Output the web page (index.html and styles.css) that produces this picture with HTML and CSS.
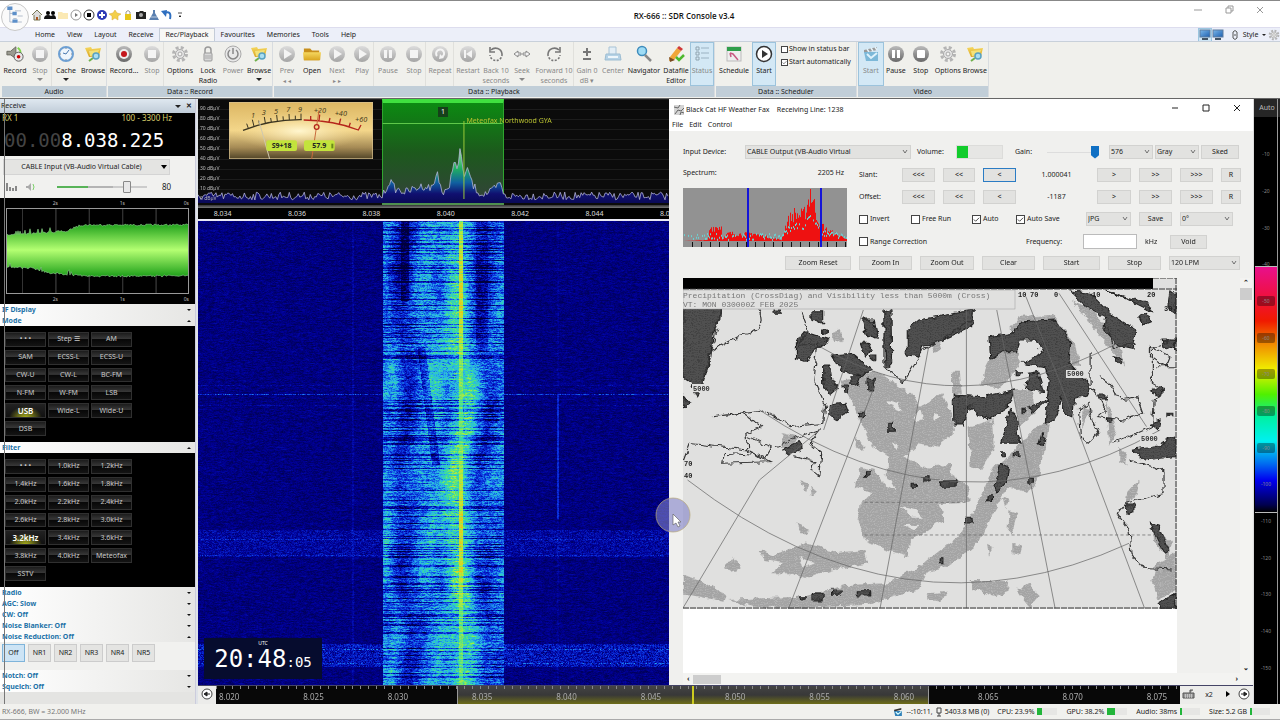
FILE: index.html
```html
<!DOCTYPE html>
<html lang="en">
<head>
    <meta charset="UTF-8">
    <meta name="viewport" content="width=device-width, initial-scale=1.0">
    <title>RX-666 :: SDR Console v3.4</title>
    <link rel="stylesheet" href="styles.css">
</head>
<body>
    <!-- Icon set -->
    <svg class="sprite" aria-hidden="true">
        <defs>
            <linearGradient id="silver" x1="0" y1="0" x2="0" y2="1"><stop offset="0" stop-color="#dcdcdc"/><stop offset="1" stop-color="#a4a4a4"/></linearGradient>
            <linearGradient id="steel" x1="0" y1="0" x2="0" y2="1"><stop offset="0" stop-color="#bbb"/><stop offset="1" stop-color="#686868"/></linearGradient>
            <linearGradient id="gold" x1="0" y1="0" x2="0" y2="1"><stop offset="0" stop-color="#f6d860"/><stop offset="1" stop-color="#d9a520"/></linearGradient>
            <linearGradient id="screen" x1="0" y1="0" x2="1" y2="1"><stop offset="0" stop-color="#7db8ea"/><stop offset="1" stop-color="#1c5fb0"/></linearGradient>
        </defs>
        <symbol id="i-speaker" viewBox="0 0 20 18"><path d="M1 6h4l6-5v13L5 10H1z" fill="#9a9a90" stroke="#66665c"/><path d="M13 2q4 3 3 7" fill="none" stroke="#7fd64d" stroke-width="2"/><circle cx="14" cy="12" r="5" fill="#e8e8e8" stroke="#555"/><circle cx="14" cy="12" r="2" fill="#c00"/></symbol>
        <symbol id="i-stop" viewBox="0 0 18 18"><circle cx="9" cy="9" r="8" fill="url(#silver)"/><rect x="5" y="5" width="8" height="8" fill="#f4f4f4"/></symbol>
        <symbol id="i-stop-dark" viewBox="0 0 18 18"><circle cx="9" cy="9" r="8" fill="url(#steel)"/><rect x="5" y="5" width="8" height="8" rx="1" fill="#fff"/></symbol>
        <symbol id="i-pause" viewBox="0 0 18 18"><circle cx="9" cy="9" r="8" fill="url(#silver)"/><path d="M5 5h3v8H5zM10 5h3v8h-3z" fill="#f4f4f4"/></symbol>
        <symbol id="i-pause-dark" viewBox="0 0 18 18"><circle cx="9" cy="9" r="8" fill="url(#steel)"/><path d="M5 5h3v8H5zM10 5h3v8h-3z" fill="#fff"/></symbol>
        <symbol id="i-play" viewBox="0 0 18 18"><circle cx="9" cy="9" r="8" fill="url(#silver)"/><path d="M6 4l8 5-8 5z" fill="#f4f4f4"/></symbol>
        <symbol id="i-clock" viewBox="0 0 18 18"><circle cx="9" cy="9" r="7" fill="#eef5fc" stroke="#6d9fd2" stroke-width="2"/><path d="M12 5L9 9 6 8" fill="none" stroke="#4a79b0"/><path d="M9 3v1M9 14v1M3 9h1M14 9h1" stroke="#888"/></symbol>
        <symbol id="i-browse" viewBox="0 0 18 18"><path d="M1 3l6-1 1 2 9-1-2 8-10 1z" fill="url(#gold)"/><path d="M5 6l10-1-2 5-7 1z" fill="#f3e27a"/><path d="M9 13l-4 3" stroke="#6fb04c" stroke-width="2"/><circle cx="12" cy="11" r="3" fill="#a9def2" stroke="#58a1c2" stroke-width="1.500"/></symbol>
        <symbol id="i-record" viewBox="0 0 18 18"><circle cx="9" cy="9" r="8" fill="url(#steel)"/><circle cx="9" cy="9" r="5" fill="#eee"/><circle cx="9" cy="9" r="3" fill="#c4161c"/></symbol>
        <symbol id="i-gear" viewBox="0 0 18 18"><circle cx="9" cy="9" r="6.500" fill="none" stroke="#b4b4b4" stroke-width="3" stroke-dasharray="2.900 2.200"/><circle cx="9" cy="9" r="4.500" fill="#e4e4e4" stroke="#a8a8a8"/><circle cx="9" cy="9" r="2" fill="#f4f4f2" stroke="#a8a8a8"/></symbol>
        <symbol id="i-lock" viewBox="0 0 18 18"><path d="M6 8V5q0-3 3-3t3 3v3" fill="none" stroke="#999" stroke-width="1.500"/><rect x="5" y="8" width="8" height="8" rx="1" fill="#d8d8d8" stroke="#999"/><path d="M6 11h6M6 13h6" stroke="#aaa"/></symbol>
        <symbol id="i-power" viewBox="0 0 18 18"><circle cx="9" cy="9" r="8" fill="#e8e8e8" stroke="#aaa"/><path d="M6 5a5 5 0 1 0 6 0M9 3v6" fill="none" stroke="#888" stroke-width="1.500"/></symbol>
        <symbol id="i-folder" viewBox="0 0 20 18"><path d="M1 3h7l2 2h8v11H1z" fill="#c88f1c"/><path d="M0 7h20l-1 9H1z" fill="url(#gold)"/></symbol>
        <symbol id="i-repeat" viewBox="0 0 18 18"><circle cx="9" cy="9" r="8" fill="url(#silver)"/><path d="M6 11a4 4 0 1 1 5 1" fill="none" stroke="#f4f4f4" stroke-width="2"/><path d="M9 9l-1 5 5-1z" fill="#f4f4f4"/></symbol>
        <symbol id="i-restart" viewBox="0 0 18 18"><circle cx="9" cy="9" r="8" fill="url(#silver)"/><path d="M5 5h2v8H5zM13 5v8L7 9z" fill="#f4f4f4"/></symbol>
        <symbol id="i-back" viewBox="0 0 18 18"><path d="M4 5a6.500 6.500 0 0 1 11 4" fill="none" stroke="#777" stroke-width="1.600"/><path d="M15 9a6 6 0 0 1-12 1" fill="none" stroke="#777" stroke-width="1.600" stroke-dasharray="2 1.500"/><path d="M3 2v5h5" fill="none" stroke="#777" stroke-width="1.600"/></symbol>
        <symbol id="i-forward" viewBox="0 0 18 18"><path d="M14 5A6.500 6.500 0 0 0 3 9" fill="none" stroke="#777" stroke-width="1.600"/><path d="M3 9a6 6 0 0 0 12 1" fill="none" stroke="#777" stroke-width="1.600" stroke-dasharray="2 1.500"/><path d="M15 2v5h-5" fill="none" stroke="#777" stroke-width="1.600"/></symbol>
        <symbol id="i-seek" viewBox="0 0 18 18"><path d="M1 9l4-3v2h3v2H5v2zM17 9l-4-3v2h-3v2h3v2z" fill="#f2f2f2" stroke="#888"/></symbol>
        <symbol id="i-gain" viewBox="0 0 18 18"><path d="M9 3v8M5 7h8M5 14h8" stroke="#777" stroke-width="2"/></symbol>
        <symbol id="i-center" viewBox="0 0 18 18"><path d="M5 9V2h7v7" fill="#e3eef6" stroke="#a8c3d6"/><path d="M2 9h14l1 6H1z" fill="#b5d2e6" stroke="#9dbdd2"/><path d="M4 12h10" stroke="#eef6fb" stroke-width="2"/></symbol>
        <symbol id="i-loupe" viewBox="0 0 18 18"><circle cx="7" cy="6" r="4.500" fill="#9fdcf5" stroke="#3e8cbc" stroke-width="1.500"/><path d="M10 10l6 6" stroke="#888" stroke-width="2.500"/></symbol>
        <symbol id="i-edit" viewBox="0 0 18 18"><path d="M3 12l7-9 4 3-7 9-5 1z" fill="#f0a63a"/><path d="M10 3l2-2 4 3-2 2z" fill="#d03838"/><path d="M2 12l1 5 5-2" fill="#7a4a20"/><path d="M9 12l3 3 5-5" fill="none" stroke="#4db82e" stroke-width="2.500"/></symbol>
        <symbol id="i-status" viewBox="0 0 18 18"><path d="M3 2h3v3H3zM3 7h3v3H3zM3 12h3v3H3z" fill="none" stroke="#90a4b0"/><path d="M8 3h8M8 8h8M8 13h8" stroke="#9bb2c2"/></symbol>
        <symbol id="i-schedule" viewBox="0 0 18 18"><rect x="2" y="2" width="14" height="14" fill="#eee" stroke="#bbb"/><rect x="2" y="2" width="14" height="4" fill="#2f9e4a"/><path d="M5 8l3 1 5 6M5 8l1 4" fill="none" stroke="#c85a82" stroke-width="1.500"/></symbol>
        <symbol id="i-start" viewBox="0 0 18 18"><circle cx="9" cy="9" r="7.500" fill="#fff" stroke="#333" stroke-width="1.500"/><path d="M7 5l6 4-6 4z" fill="#333"/></symbol>
        <symbol id="i-clap" viewBox="0 0 18 18"><path d="M2 5l13-3v3L2 8z" fill="#999"/><path d="M5 4l2 3M9 3l2 3M13 2l2 3" stroke="#e6f2f8" stroke-width="1.500"/><path d="M2 7h14v9H4z" fill="#7cb8d8"/><path d="M5 9l4 4 6-5" fill="none" stroke="#dff2fb" stroke-width="2"/></symbol>
        <symbol id="i-monitor" viewBox="0 0 12 12"><rect x="1" y="1" width="10" height="7" fill="url(#screen)" stroke="#5c7da0"/><path d="M3 10h6" stroke="#456" stroke-width="2"/></symbol>
    </svg>

    <header class="titlebar">
        <button class="app-button" aria-label="Application menu">
            <svg viewBox="0 0 28 28"><path d="M8 4v17M8 11h4M12 17h4M8 21h4M14 8h7M17 14h6M17 21h5" stroke="#a9b4c4" fill="none"/><path d="M5 3h6v4H5zM11 9h5v4h-5zM11 18h6v4h-6z" fill="#5c8fc9"/></svg>
        </button>
        <nav class="quick-access" aria-label="Quick access">
            <svg viewBox="0 0 12 12"><path d="M1 6l5-5 5 5M3 6v5h6V6" fill="#ddd" stroke="#775" /><path d="M5 8h2v3H5z" fill="#a52"/></svg>
            <svg viewBox="0 0 12 12"><path d="M0 10q0-4 4-4t4 4zM6 9q1-3 3-3 3 0 3 4H7z" fill="#111"/><circle cx="4" cy="4" r="2"/><circle cx="9" cy="4" r="2"/></svg>
            <svg viewBox="0 0 12 12"><path d="M1 3h4l1 1h5v6H1z" fill="#fbe9b4"/></svg>
            <svg viewBox="0 0 12 12"><circle cx="6" cy="6" r="5" fill="#fff" stroke="#999"/><path d="M5 4l3 2-3 2z" fill="#777"/></svg>
            <svg viewBox="0 0 12 12"><circle cx="6" cy="6" r="5" fill="#fff" stroke="#333"/><path d="M4 4h4v4H4z"/></svg>
            <svg viewBox="0 0 12 12"><circle cx="6" cy="6" r="5" fill="#2e3bb5"/><path d="M6 3v6M3 6h6" stroke="#fff" stroke-width="2"/></svg>
            <svg viewBox="0 0 12 12"><path d="M6 1l2 3 4 1-3 2 0 4-3-2-3 2V7L0 5l4-1z" fill="#f3cf4a" stroke="#d9a93a" stroke-width=".5"/></svg>
            <svg viewBox="0 0 12 12"><path d="M4 6V3q2-3 4 0v3" fill="none" stroke="#999"/><rect x="3" y="5" width="6" height="6" fill="#e6c619"/></svg>
            <svg viewBox="0 0 12 12"><path d="M1 3h3l1-1h3l1 1h2v7H1z" fill="#222"/><circle cx="6" cy="6" r="2" fill="#aaa"/></svg>
            <svg viewBox="0 0 12 12"><path d="M5 1h2v3l4 7H1l4-7z" fill="#5a7fb0"/><path d="M3 8l6 0" stroke="#bcd"/></svg>
            <svg viewBox="0 0 12 12"><path d="M3 4q8-3 6 6" fill="none" stroke="#2f6fc0" stroke-width="2"/><path d="M0 2l6-1-1 7z" fill="#2f6fc0"/></svg>
            <svg viewBox="0 0 12 12"><path d="M4 4h4M5 7h2l-1 1z" stroke="#222" stroke-width=".8"/></svg>
        </nav>
        <h1>RX-666 :: SDR Console v3.4</h1>
        <div class="window-buttons muted">
            <button aria-label="Minimize"><svg viewBox="0 0 10 10"><path d="M1 5h8"/></svg></button>
            <button aria-label="Restore"><svg viewBox="0 0 10 10"><path d="M2 3h5v5H2zM4 3V1h5v5H7"/></svg></button>
            <button aria-label="Close"><svg viewBox="0 0 10 10"><path d="M2 2l6 6M8 2l-6 6"/></svg></button>
        </div>
    </header>

    <nav class="tabs">
        <a href="#">Home</a>
        <a href="#">View</a>
        <a href="#">Layout</a>
        <a href="#">Receive</a>
        <a href="#" class="active">Rec/Playback</a>
        <a href="#">Favourites</a>
        <a href="#">Memories</a>
        <a href="#">Tools</a>
        <a href="#">Help</a>
        <div class="tab-tools">
            <svg class="on"><use href="#i-monitor"/></svg>
            <svg><use href="#i-monitor"/></svg>
            <svg class="link" viewBox="0 0 12 12"><path d="M4 5V3q2-3 4 0v2M4 7v2q2 3 4 0V7M3 6h6" fill="none" stroke="#555"/></svg>
            <button>Style &nbsp;<span class="tri small"></span></button>
            <svg><use href="#i-gear"/></svg>
        </div>
    </nav>

    <section class="ribbon">
        <div class="group">
            <div class="tools">
                <button><svg><use href="#i-speaker"/></svg>Record</button>
                <button class="narrow" disabled><svg><use href="#i-stop"/></svg>Stop<span class="tri"></span></button>
                <button class="mid sep"><svg><use href="#i-clock"/></svg>Cache<span class="tri"></span></button>
                <button><svg><use href="#i-browse"/></svg>Browse</button>
            </div>
            <h2>Audio</h2>
        </div>
        <div class="group">
            <div class="tools">
                <button class="wide"><svg><use href="#i-record"/></svg>Record...</button>
                <button class="narrow" disabled><svg><use href="#i-stop"/></svg>Stop</button>
                <button class="wide sep"><svg><use href="#i-gear"/></svg>Options</button>
                <button class="narrow"><svg><use href="#i-lock"/></svg>Lock<br>Radio</button>
                <button disabled><svg><use href="#i-power"/></svg>Power</button>
                <button><svg><use href="#i-browse"/></svg>Browse<span class="tri"></span></button>
            </div>
            <h2>Data :: Record</h2>
        </div>
        <div class="group">
            <div class="tools">
                <button disabled><svg><use href="#i-play"/></svg>Prev<small>◄◄</small></button>
                <button class="narrow"><svg><use href="#i-folder"/></svg>Open</button>
                <button disabled><svg><use href="#i-play"/></svg>Next<small>►►</small></button>
                <button class="narrow" disabled><svg><use href="#i-play"/></svg>Play</button>
                <button class="mid sep" disabled><svg><use href="#i-pause"/></svg>Pause</button>
                <button class="narrow" disabled><svg><use href="#i-stop"/></svg>Stop</button>
                <button class="mid sep" disabled><svg><use href="#i-repeat"/></svg>Repeat</button>
                <button class="mid sep" disabled><svg><use href="#i-restart"/></svg>Restart</button>
                <button class="mid" disabled><svg><use href="#i-back"/></svg>Back 10<br>seconds</button>
                <button class="narrow" disabled><svg><use href="#i-seek"/></svg>Seek<span class="tri"></span></button>
                <button class="longer" disabled><svg><use href="#i-forward"/></svg>Forward 10<br>seconds</button>
                <button class="sep" disabled><svg><use href="#i-gain"/></svg>Gain 0<br>dB ▾</button>
                <button disabled><svg><use href="#i-center"/></svg>Center</button>
                <button class="long"><svg><use href="#i-loupe"/></svg>Navigator</button>
                <button class="mid"><svg><use href="#i-edit"/></svg>Datafile<br>Editor</button>
                <button class="narrow on" disabled><svg><use href="#i-status"/></svg>Status</button>
            </div>
            <h2>Data :: Playback</h2>
        </div>
        <div class="group">
            <div class="tools">
                <button class="long"><svg><use href="#i-schedule"/></svg>Schedule</button>
                <button class="narrow on"><svg><use href="#i-start"/></svg>Start</button>
                <div class="checks">
                    <label><input type="checkbox">Show in status bar</label>
                    <label><input type="checkbox" checked>Start automatically</label>
                </div>
            </div>
            <h2>Data :: Scheduler</h2>
        </div>
        <div class="group">
            <div class="tools">
                <button class="on" disabled><svg><use href="#i-clap"/></svg>Start</button>
                <button class="narrow"><svg><use href="#i-pause-dark"/></svg>Pause</button>
                <button><svg><use href="#i-stop-dark"/></svg>Stop</button>
                <button class="mid"><svg><use href="#i-gear"/></svg>Options</button>
                <button><svg><use href="#i-browse"/></svg>Browse</button>
            </div>
            <h2>Video</h2>
        </div>
    </section>

    <main>
        <aside class="receive">
            <div class="panel-head"><span>Receive</span><span class="tri"></span><b>✕</b></div>
            <div class="vfo">
                <div class="vfo-info"><span>RX 1</span><span>100 - 3300 Hz</span></div>
                <div class="freq"><span>00.00</span>8.038.225</div>
            </div>
            <div class="output">
                <select aria-label="Output device"><option>CABLE Input (VB-Audio Virtual Cable)</option></select>
                <div class="volume">
                    <svg viewBox="0 0 12 10"><path d="M2 1v8M5 5v4M8 6v3M11 4v5" stroke="#888" stroke-width="2"/></svg>
                    <svg viewBox="0 0 12 10"><path d="M1 4h2l3-3v8L3 6H1z" fill="#aaa"/><path d="M8 2q2 3 0 6" stroke="#7ccf6a" fill="none"/></svg>
                    <input type="range" min="0" max="100" value="80" aria-label="Volume">
                    <output>80</output>
                </div>
            </div>
            <div class="audio">
                <div class="seconds"><span>2s</span><span>1s</span><span>0s</span></div>
                <canvas id="audio-wave"></canvas>
                <div class="seconds"><span>2s</span><span>1s</span><span>0s</span></div>
            </div>
            <button class="section-head">IF Display<span class="tri"></span></button>
            <button class="section-head">Mode<span class="tri up"></span></button>
            <div class="keys modes">
                <button>• • •</button><button>Step ☰</button><button>AM</button>
                <button>SAM</button><button>ECSS-L</button><button>ECSS-U</button>
                <button>CW-U</button><button>CW-L</button><button>BC-FM</button>
                <button>N-FM</button><button>W-FM</button><button>LSB</button>
                <button class="active">USB</button><button>Wide-L</button><button>Wide-U</button>
                <button>DSB</button>
            </div>
            <button class="section-head">Filter<span class="tri up"></span></button>
            <div class="keys filters">
                <button>• • •</button><button>1.0kHz</button><button>1.2kHz</button>
                <button>1.4kHz</button><button>1.6kHz</button><button>1.8kHz</button>
                <button>2.0kHz</button><button>2.2kHz</button><button>2.4kHz</button>
                <button>2.6kHz</button><button>2.8kHz</button><button>3.0kHz</button>
                <button class="active">3.2kHz</button><button>3.4kHz</button><button>3.6kHz</button>
                <button>3.8kHz</button><button>4.0kHz</button><button>Meteofax</button>
                <button>SSTV</button>
            </div>
            <button class="section-head">Radio<span class="tri"></span></button>
            <button class="section-head">AGC: Slow<span class="tri"></span></button>
            <button class="section-head">CW: Off<span class="tri"></span></button>
            <button class="section-head">Noise Blanker: Off<span class="tri"></span></button>
            <button class="section-head">Noise Reduction: Off<span class="tri up"></span></button>
            <div class="nr">
                <button class="active">Off</button><button>NR1</button><button>NR2</button><button>NR3</button><button>NR4</button><button>NR5</button>
            </div>
            <button class="section-head">Notch: Off<span class="tri"></span></button>
            <button class="section-head">Squelch: Off<span class="tri"></span></button>
        </aside>

        <div class="work">
            <div class="views">
                <section class="radio">
                    <div class="spectrum">
                        <div class="passband"><span>1</span></div>
                        <canvas id="spectrum"></canvas>
                        <ul class="levels">
                            <li>90 dBµV</li><li>80 dBµV</li><li>70 dBµV</li><li>60 dBµV</li><li>50 dBµV</li><li>40 dBµV</li><li>30 dBµV</li><li>20 dBµV</li><li>10 dBµV</li><li>0 dBµV</li>
                        </ul>
                        <span class="station">Meteofax Northwood GYA</span>
                        <svg class="meter" viewBox="100 13 432 171">
                            <defs>
                                <linearGradient id="face" x1="0" y1="0" x2="0" y2="1"><stop offset="0" stop-color="#dcb662"/><stop offset=".5" stop-color="#f3d68a"/><stop offset=".8" stop-color="#a58a55"/><stop offset="1" stop-color="#4f4327"/></linearGradient>
                                <radialGradient id="glow" cx=".5" cy=".5" r=".5"><stop offset="0" stop-color="#fff6cf"/><stop offset="1" stop-color="#f3d68a" stop-opacity="0"/></radialGradient>
                            </defs>
                            <rect x="100" y="13" width="432" height="171" fill="url(#face)" stroke="#d8c290" stroke-width="4"/>
                            <ellipse cx="310" cy="100" rx="200" ry="60" fill="url(#glow)"/>
                            <path d="M142 98Q225 65 318 66" fill="none" stroke="#3a3420" stroke-width="4"/>
                            <path d="M158 92l-5-14M175 86l-5-20M192 81l-3-12M209 76l-3-18M227 73l-2-12M245 70l-2-18M263 68l-1-12M281 67l-1-18M299 66v-12M316 66V48" stroke="#3a3420" stroke-width="3"/>
                            <path d="M324 67Q415 68 488 97L496 82M345 67v-12M370 69l2-18M400 73l3-12M431 79l4-16M460 87l4-12" fill="none" stroke="#b5261c" stroke-width="4"/>
                            <g class="meter-text"><text x="166" y="60">1</text><text x="198" y="53">3</text><text x="235" y="48">5</text><text x="272" y="44">7</text><text x="307" y="42">9</text><text x="354" y="46">+20</text><text x="417" y="56">+40</text><text x="478" y="74">+60</text></g>
                            <path d="M190 70L222 184" stroke="#cfc8b0" stroke-width="3"/>
                            <path d="M370 38L348 184" stroke="#c86a3c" stroke-width="3"/>
                            <circle cx="363" cy="88" r="7" fill="#f3d68a" stroke="#b5261c" stroke-width="4"/>
                            <rect x="212" y="128" width="92" height="32" rx="6" fill="#c3e33c"/>
                            <rect x="325" y="128" width="92" height="32" rx="6" fill="#c3e33c"/>
                            <path d="M410 138v14" stroke="#6b8a1a" stroke-width="6"/>
                            <g class="meter-read"><text x="258" y="152">S9+18</text><text x="371" y="152">57.9</text></g>
                        </svg>
                    </div>
                    <div class="scale">
                        <span>8.034</span><span>8.036</span><span>8.038</span><span>8.040</span><span>8.042</span><span>8.044</span><span>8.046</span>
                    </div>
                    <div class="waterfall">
                        <canvas id="waterfall"></canvas>
                        <div class="clock"><small>UTC</small><time>20:48<span>:05</span></time></div>
                    </div>
                </section>

                <section class="fax">
                    <header class="fax-title">
                        <svg viewBox="0 0 10 10"><rect width="10" height="10" fill="#d4d4d4"/><path d="M0 2l4 1 2-3M1 9l3-4 3 1 3-3M6 10l1-3 3 1" stroke="#666" fill="none"/></svg>
                        <h2>Black Cat HF Weather Fax &nbsp;&nbsp; Receiving Line: 1238</h2>
                        <div class="window-buttons">
                            <button aria-label="Minimize"><svg viewBox="0 0 10 10"><path d="M2 5h6"/></svg></button>
                            <button aria-label="Maximize"><svg viewBox="0 0 10 10"><path d="M2 2h6v6H2z"/></svg></button>
                            <button aria-label="Close"><svg viewBox="0 0 10 10"><path d="M2 2l6 6M8 2l-6 6"/></svg></button>
                        </div>
                    </header>
                    <nav class="fax-menu"><a href="#">File</a><a href="#">Edit</a><a href="#">Control</a></nav>

                    <div class="fax-body">
                        <div class="row row-input">
                            <label for="device">Input Device:</label>
                            <select id="device"><option>CABLE Output (VB-Audio Virtual</option></select>
                            <span>Volume:</span>
                            <div class="level"></div>
                            <label for="gain">Gain:</label>
                            <input id="gain" type="range" min="0" max="100" value="100">
                            <select aria-label="Lines"><option>576</option></select>
                            <select aria-label="Palette"><option>Gray</option></select>
                            <button>Sked</button>
                        </div>
                        <div class="tune">
                            <div class="mini">
                                <div class="mini-head"><span>Spectrum:</span><span>2205 Hz</span></div>
                                <canvas id="mini-spectrum"></canvas>
                            </div>
                            <div class="tune-rows">
                                <div class="row row-step">
                                    <span>Slant:</span>
                                    <button>&lt;&lt;&lt;</button><button>&lt;&lt;</button><button class="focused">&lt;</button>
                                    <output>1.000041</output>
                                    <button>&gt;</button><button>&gt;&gt;</button><button>&gt;&gt;&gt;</button><button>R</button>
                                </div>
                                <div class="row row-step">
                                    <span>Offset:</span>
                                    <button>&lt;&lt;&lt;</button><button>&lt;&lt;</button><button>&lt;</button>
                                    <output>-1187</output>
                                    <button>&gt;</button><button>&gt;&gt;</button><button>&gt;&gt;&gt;</button><button>R</button>
                                </div>
                                <div class="row row-flags">
                                    <label><input type="checkbox">Invert</label>
                                    <label><input type="checkbox">Free Run</label>
                                    <label><input type="checkbox" checked>Auto</label>
                                    <label><input type="checkbox" checked>Auto Save</label>
                                    <select aria-label="Format"><option>JPG</option></select>
                                    <button>Save</button>
                                    <select aria-label="Rotation"><option>0°</option></select>
                                </div>
                                <div class="row row-freq">
                                    <label><input type="checkbox">Range Correction</label>
                                    <label for="khz">Frequency:</label>
                                    <input id="khz" type="text">
                                    <span>kHz</span>
                                    <button>Void</button>
                                </div>
                            </div>
                        </div>
                        <div class="row row-zoom">
                            <button>Zoom Reset</button><button>Zoom In</button><button>Zoom Out</button><button>Clear</button><button>Start</button><button>Stop</button>
                            <select aria-label="Speed"><option>120 LPM</option></select>
                        </div>
                    </div>

                    <div class="fax-view">
                        <div class="paper">
                            <svg class="map" viewBox="0 0 494 331">
                                <defs>
                                    <filter id="rough" filterUnits="userSpaceOnUse" x="0" y="0" width="494" height="331" color-interpolation-filters="sRGB"><feTurbulence type="fractalNoise" baseFrequency=".14" numOctaves="2" seed="4" result="n"/><feDisplacementMap in="SourceGraphic" in2="n" scale="7" xChannelSelector="R" yChannelSelector="G"/></filter>
                                    <pattern id="dots" width="6" height="6" patternUnits="userSpaceOnUse"><rect width="6" height="6" fill="#505050"/><rect width="3" height="3" fill="#404040"/></pattern>
                                    <pattern id="haze" width="6" height="6" patternUnits="userSpaceOnUse"><rect width="6" height="6" fill="#a4a4a4"/><rect width="3" height="3" fill="#b4b4b4"/></pattern>
                                </defs>
                                <rect width="494" height="331" fill="#e0e0df"/>
                                <g filter="url(#rough)">
                                    <g class="gray" transform="translate(-13 2) scale(.389 .3333)">
                                        <path d="M440 300L530 275 620 340 640 380 700 340 725 400 730 460 690 500 640 490 600 530 650 560 720 555 735 600 770 620 770 665 690 670 705 720 620 780 610 830 560 810 500 780 485 720 490 670 520 640 475 620 490 560 560 580 560 530 520 500 490 430 470 370z"/>
                                        <path d="M765 440L830 420 835 500 800 570 770 560z"/>
                                        <path d="M725 275H745L750 340 725 345zM810 260L845 180 890 170 900 260 850 320 800 320z"/>
                                        <path d="M830 560L860 540 940 440 955 520 950 590 920 640 880 620 860 640 830 700 800 780 740 840 660 880 640 930 500 975 330 985 210 980 150 960 230 955 340 950 450 915 560 910 640 860 740 770 790 680z"/>
                                        <path d="M33 885L80 900 145 945 140 965 33 940z"/>
                                        <path d="M230 810L265 825 300 810 340 790 390 800 420 820 500 810 510 850 420 870 350 895 310 880 260 880 290 850 240 840z"/>
                                        <path d="M140 860L160 830 180 855 170 880zM770 900L870 900 865 940 830 950 780 925zM890 930L920 910 950 945 925 980zM660 940L715 935 700 965 665 960zM870 690L895 700 880 765 868 750zM880 790L905 800 900 825 880 820zM815 790L832 800 820 830zM855 650L870 660 862 685zM1175 640L1205 600 1195 650 1170 680zM1250 850L1300 820V930L1255 960 1240 900zM1240 735L1290 790 1280 840 1245 790zM415 160L440 150 445 180 425 190zM1030 60L1090 90 1160 200 1170 260 1120 190 1060 100zM870 150L900 110 985 105 1040 190 1055 260 1035 260 1000 150zM940 440L975 420 965 510 945 540zM1060 380L1085 390 1060 450zM1120 360L1135 400 1150 450 1130 500zM335 600L355 610 350 635zM360 620l15 15-10 10zM325 730l20 10 10 20-20 0zM480 470l20 30-5 15-18-20zM290 460L330 470 310 510 285 500zM1155 500l20 20-5 35-15-10zM670 190l20-10 10 30-20 10zM880 330L930 330 940 400 900 440z"/>
                                    </g>
                                    <g class="light" transform="translate(-13 2) scale(.389 .3333)">
                                        <path d="M560 360l30 10 10 25-25-5zM700 510L770 480 775 540 720 550zM590 680l40 10 20 20-30 0zM630 400l15-10 5 30-15 5zM570 490l20 10-10 10zM690 600l15 0-5 15zM520 540l40 50 20 40-25-10-35-60zM600 735l40 0-20 14zM330 830l40 20-30 15zM680 400l10 10-10 15z"/>
                                    </g>
                                    <g class="dark" transform="translate(-13 2) scale(.389 .3333)">
                                        <path d="M33 70L130 85 128 120 110 170 105 230 85 310 70 350 55 310 33 290z"/>
                                        <path d="M610 150L640 120 780 90 775 140 700 180 650 200 640 230 610 225zM495 120L525 120 535 175 505 165zM550 100L568 90 570 260 555 260zM325 190L345 155 410 180 370 210 350 245 325 235z"/>
                                        <path d="M415 225L470 220 520 270 490 290 440 270zM395 255l15 0 5 40 15 30-20 20-15-30zM465 290l25 0-10 30-15-10zM490 190l20 0 10 20-20 15zM510 295l18 0-5 35-15 0zM410 375l40-5 8 25-30 25-20-20zM445 315l12 0 0 25-10 0z"/>
                                        <path d="M820 170L880 160 905 125 990 120 1030 190 1025 250 1080 320 1070 345 1040 355 1035 410 1015 400 1005 350 990 420 965 430 970 360 930 400 925 380 970 360 975 300 965 260 905 250 960 220 940 180 900 180 890 215 855 215 825 240z"/>
                                        <path d="M920 280L945 275 960 335 915 325zM728 345L800 350 885 330 870 380 820 420 765 380 755 435 730 435zM875 385L895 430 890 460 900 490 850 490 865 440zM850 550l20 10-5 45-25 35-5-20zM955 465l12 10-10 25-8-10z"/>
                                        <path d="M1030 33L1080 40 1130 100 1200 150 1190 205 1150 195 1115 150 1120 110 1070 80zM1120 33L1230 70 1240 95 1180 60zM1140 230l25 5-5 20zM1265 180l35 0v30l-30-10zM1205 110l20-10 10 25-20 10zM1190 510L1250 500 1275 480 1300 470V530L1220 540zM1235 430l25-10-5 30zM1240 330l20-10 5 20-15 10zM1235 730l20 5 30 75-15 10zM1285 33L1300 40V100L1280 80zM1170 675l25 0 0 20-20 5zM1255 970L1300 940V985H1260zM290 510L330 485 340 505 305 525zM34 350l14 20-14 10z"/>
                                        <path d="M500 575h14v14h-14zM650 590h16v16h-16zM620 610h16v12h-16zM695 605h38v14h-38zM760 715h14v14h-14zM560 430h14v24h-14zM365 942h26v18h-26zM418 930h22v16h-22zM484 932h32v16h-32zM692 836h12v12h-12zM335 950h10v10h-10zM905 385h10v10h-10zM850 518h12v12h-12zM885 518h12v12h-12zM920 595h14v12h-14zM815 650h14v12h-14zM1105 345h14v12h-14zM1122 415h14v12h-14zM485 400h12v10h-12zM515 225h14v14h-14zM1280 400h10v10h-10zM365 95h30v30h-30zM395 150h12v12h-12zM265 90h20v10h-20zM890 275h12v12h-12z"/>
                                    </g>
                                    <g class="coast" transform="translate(-13 2) scale(.389 .3333)">
                                        <path d="M130 88L110 200 70 350M230 92Q250 160 180 165L110 210M340 100L355 150 330 200 380 190 370 300 400 380 395 430 310 440 240 390 110 410 190 400 235 440 195 460 200 510 240 540 260 500 200 470M34 540L50 490 200 510 260 545 135 550 140 520 210 525M270 500L330 470 385 450 360 490 390 520 385 590 365 570 375 545 320 530M550 90V260L600 305 650 210 700 175 775 120M1080 220V320L1105 355 1120 390 1100 410 1170 420 1215 400 1200 350 1160 360 1130 310 1105 290M1050 390L1075 370 1085 420 1100 460 1075 490 1055 470zM1140 490L1240 440 1245 360 1270 330 1240 310 1240 200 1290 180M1250 260h50M1180 540L1270 570V640L1170 670 1150 700 1180 750 1185 820 1215 865 1290 870M1235 200l50 30-10 30-40-30zM1125 140L1140 200 1200 190"/>
                                    </g>
                                </g>
                                <g class="grid" transform="translate(-13 2) scale(.389 .3333)">
                                    <path d="M497 90L395 450M230 600L33 985M525 320L305 985M385 200Q740 440 1150 190M230 390Q740 790 1260 450M45 600Q600 1100 1180 790M385 450L230 600M665 200L540 985M762 90V985M840 90L990 985M915 50L1000 300 1220 985M1000 40L1225 440"/>
                                    <path d="M500 667H760M500 765H1250" stroke-dasharray="8 6"/>
                                </g>
                                <rect width="470" height="11" fill="#000"/>
                                <path d="M0 11h494M470 0h24M493 0v331M0 330h494" stroke="#333" fill="none" stroke-dasharray="6 1"/>
                                <rect x="0" y="12" width="332" height="19" fill="#e0e0df" stroke="#999" stroke-width=".5"/>
                                <g class="map-title"><text x="0" y="20">Precipitation (CrossDiag) and Visibility less than 5000m (Cross)</text><text x="0" y="29">VT: MON 030000Z FEB 2025</text></g>
                                <g class="map-text"><text x="335" y="19">10</text><text x="347" y="19">70</text><text x="371" y="19">0</text><text x="409" y="19">10</text><text x="464" y="19">20</text><text x="481" y="33">30</text><text x="1" y="188">70</text><text x="1" y="200">40</text></g>
                                <g class="map-depth"><rect x="9" y="106" width="18" height="8"/><rect x="383" y="92" width="18" height="8"/><rect x="457" y="156" width="18" height="8"/><text x="10" y="113">5000</text><text x="384" y="98">5000</text><text x="458" y="163">5000</text></g>
                            </svg>
                        </div>
                        <div class="vscroll"><b>⌃</b><i></i><b>⌄</b></div>
                        <div class="hscroll"><b>‹</b><i></i><b>›</b></div>
                    </div>
                </section>
            </div>

            <div class="band">
                <button aria-label="Previous band"><svg viewBox="0 0 14 14"><circle cx="7" cy="7" r="5" fill="#fff" stroke="#444"/><path d="M10 7H5M7 5L4 7l3 2z" stroke="#222" fill="#222"/></svg></button>
                <div class="band-scale">
                    <div class="band-view"></div>
                    <span>8.020</span><span>8.025</span><span>8.030</span><span>8.035</span><span>8.040</span><span>8.045</span><span>8.050</span><span>8.055</span><span>8.060</span><span>8.065</span><span>8.070</span><span>8.075</span>
                </div>
                <button aria-label="Keyboard"><svg viewBox="0 0 14 14"><path d="M1 6h11v5H1zM8 6V3h3" fill="#999" stroke="#555"/><path d="M3 8h7M3 10h7" stroke="#eee" stroke-dasharray="1 1"/></svg></button>
                <button class="zoom">x2</button>
                <button class="next" aria-label="More"><svg viewBox="0 0 14 14"><path d="M5 4l4 3-4 3z"/></svg></button>
                <button aria-label="Next band"><svg viewBox="0 0 14 14"><circle cx="7" cy="7" r="5" fill="#fff" stroke="#444"/><path d="M4 7h5M7 5l3 2-3 2z" stroke="#222" fill="#222"/></svg></button>
            </div>
        </div>

        <aside class="legend">
            <button>Auto</button>
            <div class="ramp"></div>
            <ol>
                <li>-10</li><li>-20</li><li>-30</li><li>-40</li><li class="chip">-50</li><li class="chip">-60</li><li class="chip">-70</li><li class="chip">-80</li><li class="chip">-90</li><li>-100</li><li>-110</li><li>-120</li><li>-130</li><li>-140</li><li>-150</li>
            </ol>
        </aside>
        <svg class="pointer" viewBox="0 0 36 36"><circle cx="18" cy="18" r="17" fill="#8080c8" fill-opacity=".6" stroke="#b8a878" stroke-opacity=".7"/><path d="M18 17v11l3-2 2 4 2-1-2-4h3z" fill="#fff" stroke="#555" stroke-width=".6"/></svg>
    </main>

    <footer>
        <span class="grow">RX-666, BW = 32.000 MHz</span>
        <svg viewBox="0 0 18 18"><path d="M2 5l13-3v3L2 8z" fill="#333"/><path d="M2 7h14v9H4z" fill="#2f80b8"/><path d="M5 9l4 4 6-5" fill="none" stroke="#dff" stroke-width="2"/></svg>
        <span>--:10:11,</span>
        <svg class="disk" viewBox="0 0 6 10"><path d="M1 1h4v5H1zM3 6v3M1 9h4" fill="none" stroke="#444"/></svg>
        <span class="time">5403.8 MB (0)</span>
        <span>CPU: 23.9%</span><meter min="0" max="100" value="24"></meter>
        <span>GPU: 38.2%</span><meter min="0" max="100" value="38"></meter>
        <span>Audio: 38ms</span><meter min="0" max="100" value="10"></meter>
        <span>Size: 5.2 GB</span><meter min="0" max="100" value="10"></meter>
    </footer>

    <script src="script.js"></script>
</body>
</html>
```

FILE: styles.css
```css
* {
    box-sizing: border-box;
}
body {
    margin: 0;
    height: 100vh;
    display: flex;
    flex-direction: column;
    overflow: hidden;
    font-family: "Noto Sans", "Open Sans", sans-serif;
    font-size: 7px;
    line-height: 10px;
    color: #222;
    background-color: #f0f0ee;
    border-top: 1px solid #888;
}
button, select, input {
    font: inherit;
    color: inherit;
    margin: 0;
}
button {
    padding: 0;
    border: none;
    background: none;
}
h1, h2, ul, ol {
    margin: 0;
    padding: 0;
    font-size: inherit;
    font-weight: normal;
    list-style: none;
}
a {
    color: inherit;
    text-decoration: none;
}
canvas {
    display: block;
}
.sprite {
    position: absolute;
    width: 0;
    height: 0;
}
.tri {
    display: inline-block;
    border: 3px solid transparent;
    border-top-color: currentColor;
    border-bottom: none;
}
.tri.small {
    border-width: 2px;
    border-bottom: none;
    margin-bottom: 1px;
}
.tri.up {
    transform: rotate(180deg);
}
input[type="checkbox"] {
    appearance: none;
    width: 9px;
    height: 9px;
    flex: none;
    border: 1px solid #444;
    background-color: #fff;
}
input[type="checkbox"]:checked {
    background-image: url("data:image/svg+xml,%3Csvg xmlns='http://www.w3.org/2000/svg' viewBox='0 0 8 8'%3E%3Cpath d='M1 4l2 2 4-4' fill='none' stroke='%23333'/%3E%3C/svg%3E");
}
label {
    display: flex;
    align-items: center;
    white-space: nowrap;
}

/* Title bar */
.titlebar {
    display: grid;
    grid-template-columns: 1fr auto 1fr;
    align-items: center;
    height: 26px;
    padding-top: 2px;
    background-color: #fff;
    position: relative;
}
.titlebar h1 {
    grid-column: 2;
    font: 600 8px "Open Sans", sans-serif;
    padding-left: 88px;
    color: #111;
}
.app-button {
    position: absolute;
    left: 1px;
    top: 2px;
    width: 28px;
    height: 28px;
    border: 1px solid #c8c8c8;
    border-radius: 50%;
    background-color: #fafafa;
    z-index: 2;
}
.app-button svg {
    width: 24px;
    height: 24px;
}
.quick-access {
    display: flex;
    gap: 1px;
    padding: 0 0 0 31px;
}
.quick-access svg {
    width: 12px;
    height: 12px;
}
.window-buttons {
    display: flex;
    justify-content: flex-end;
    margin-left: auto;
}
.window-buttons button {
    width: 31px;
    height: 14px;
}
.window-buttons svg {
    width: 10px;
    height: 10px;
    fill: none;
    stroke: #222;
}
.titlebar .window-buttons {
    padding: 0 5px 8px 0;
}
.window-buttons.muted svg {
    stroke: #999;
}

/* Tabs */
.tabs {
    display: flex;
    align-items: stretch;
    height: 14px;
    padding-left: 29px;
    background-color: #eceff9;
    border-top: 1px solid #dde;
    line-height: 14px;
}
.tabs a {
    padding: 0 6px;
}
.tabs a.active {
    padding: 0 5px;
    background-color: #f7f7f5;
    border: 1px solid #c4ccd8;
    border-bottom: none;
    line-height: 12px;
}
.tab-tools {
    display: flex;
    align-items: center;
    gap: 1px;
    margin-left: auto;
}
.tab-tools svg {
    width: 12px;
    height: 12px;
}
.tab-tools .link {
    margin-left: 4px;
}
.tab-tools svg.on {
    background-color: #cfe6f6;
    outline: 1px solid #9cc6e0;
}
.tab-tools button {
    padding: 0 1px;
}

/* Ribbon */
.ribbon {
    display: flex;
    gap: 1px;
    height: 58px;
    padding: 0 2px 1px;
    background-color: #f0f0ec;
    border-top: 1px solid #c8d0da;
    border-bottom: 1px solid #666;
}
.group {
    display: flex;
    flex-direction: column;
    border-right: 1px solid #d8dce0;
}
.group h2 {
    flex: none;
    background-color: #c1ced8;
    text-align: center;
    line-height: 11px;
}
.tools {
    display: flex;
    flex: 1;
    min-height: 0;
}
.tools button {
    width: 26px;
    display: flex;
    flex-direction: column;
    align-items: center;
    padding-top: 3px;
    white-space: nowrap;
}
.tools button svg {
    width: 18px;
    height: 18px;
    flex: none;
    margin-bottom: 3px;
}
.tools button:disabled {
    color: #888;
}
.tools .narrow {
    width: 24px;
}
.tools .mid {
    width: 28px;
}
.tools .wide {
    width: 32px;
}
.tools .long {
    width: 36px;
}
.tools .longer {
    width: 40px;
}
.tools .sep {
    box-shadow: -1px 0 #e0e0dc;
}
.tools .tri {
    margin-top: 2px;
}
.tools small {
    font-size: 5px;
}
.tools .on {
    background-color: #d3e8f5;
    box-shadow: inset 0 0 0 1px #9cc3dc;
}
.checks {
    display: flex;
    flex-direction: column;
    gap: 3px;
    padding: 2px 5px;
}
.checks label {
    gap: 1px;
}
.checks input[type="checkbox"] {
    width: 7px;
    height: 7px;
}

/* Main area */
main {
    flex: 1;
    min-height: 0;
    display: flex;
    position: relative;
    background-color: #dfe3e8;
}
.receive {
    width: 196px;
    display: flex;
    flex-direction: column;
    position: relative;
    overflow: hidden;
    background-color: #e4e4e2;
    border-right: 1px solid #ccd;
}
.receive::after {
    content: "";
    position: absolute;
    left: 4px;
    top: 0;
    bottom: 0;
    width: 1px;
    background-color: #777;
}
.panel-head {
    display: flex;
    align-items: center;
    gap: 5px;
    height: 14px;
    padding: 0 3px 0 1px;
    background-image: linear-gradient(#dfe8f0, #c0ccd8);
}
.panel-head span:first-child {
    flex: 1;
}
.vfo {
    height: 43px;
    padding: 0 5px 0 2px;
    background-color: #000;
    color: #fff;
}
.vfo-info {
    display: flex;
    justify-content: space-between;
    padding-right: 18px;
    font-size: 8px;
    color: #d9cf6c;
}
.freq {
    padding-left: 2px;
    font: 19px/34px "DejaVu Sans Mono", monospace;
    white-space: nowrap;
}
.freq span {
    color: #444;
}
.output {
    height: 42px;
    padding: 3px 3px 0;
    background-color: #f1f1ef;
}
.output select {
    appearance: none;
    display: block;
    width: 167px;
    height: 16px;
    padding: 0 20px 0 10px;
    border: 1px solid #d4d4d4;
    border-radius: 0;
    text-align: center;
    background: #e4e4e2 url("data:image/svg+xml,%3Csvg xmlns='http://www.w3.org/2000/svg' viewBox='0 0 6 4'%3E%3Cpath d='M0 0h6L3 4z'/%3E%3C/svg%3E") no-repeat right 2px center / 6px 4px;
}
.volume {
    display: flex;
    align-items: center;
    gap: 8px;
    height: 23px;
    padding-left: 2px;
}
.volume svg {
    width: 12px;
    height: 10px;
}
.volume output {
    font-size: 8px;
    padding-left: 7px;
}
input[type="range"] {
    appearance: none;
    background: none;
    min-width: 0;
}
.volume input {
    width: 90px;
    height: 14px;
    margin-left: 12px;
    background: linear-gradient(90deg, #58b358 35%, #b4b4b4 35% 62%, #ccc 62%) no-repeat center / 100% 2px;
}
.volume input::-webkit-slider-thumb {
    appearance: none;
    width: 8px;
    height: 12px;
    border: 1px solid #888;
    border-radius: 1px;
    background-color: #e8e8e8;
}
.audio {
    height: 106px;
    display: flex;
    flex-direction: column;
    padding: 0 6px;
    background-color: #000;
    color: #bbb;
    font-size: 5px;
}
.audio canvas {
    width: 100%;
    height: 86px;
}
.seconds {
    display: grid;
    grid-template-columns: 52px 67px 1fr;
    line-height: 10px;
    text-align: right;
}
.section-head {
    display: flex;
    justify-content: space-between;
    align-items: center;
    height: 11px;
    flex: none;
    padding: 0 4px 0 2px;
    font-weight: bold;
    color: #2272a8;
    background-image: linear-gradient(90deg, #fff, #e6e6e4);
}
.section-head .tri {
    border-width: 2px;
    border-bottom: none;
    color: #111;
}
.keys {
    display: grid;
    grid-template-columns: 41px 41px 41px;
    gap: 3px 2px;
    padding: 6px 5px;
    background-color: #000;
}
.modes {
    height: 116px;
}
.filters {
    height: 134px;
}
.keys button {
    border: 1px solid #303030;
    background-image: linear-gradient(#1c1c1c, #383838 45%, #080808 50%, #141414);
    color: #c8c8c8;
    line-height: 8px;
}
.keys .active {
    font-size: 8px;
    font-weight: 600;
    color: #fff;
    background-image: radial-gradient(ellipse at 50% 110%, #b3b91c, transparent 60%), linear-gradient(#222, #111);
}
.nr {
    display: flex;
    gap: 3px;
    height: 28px;
    padding: 2px 2px 8px;
    background-color: #f1f1ef;
}
.nr button {
    width: 23px;
    border: 1px solid #ccc;
    background-color: #e4e4e2;
}
.nr .active {
    background-color: #cde4f5;
    border-color: #7fb4da;
}

/* Radio view */
.work {
    flex: 1;
    min-width: 0;
    display: flex;
    flex-direction: column;
    padding-left: 2px;
}
.views {
    flex: 1;
    min-height: 0;
    display: grid;
    grid-template-columns: 471fr 584fr;
}
.radio {
    display: flex;
    flex-direction: column;
    min-width: 0;
}
.spectrum {
    position: relative;
    height: 106px;
    overflow: hidden;
    background: #0b0b0b repeating-linear-gradient(#1c1c1c 0 1px, transparent 1px 10px);
}
.spectrum canvas {
    position: relative;
    width: 100%;
    height: 100%;
}
.passband {
    position: absolute;
    left: 39%;
    width: 26%;
    top: 0;
    bottom: 0;
    border: 1px solid #2fa52f;
    border-top: 4px solid #3fe03f;
    border-bottom: 4px solid #4f8f4f;
    background-image: linear-gradient(#0c8a12, #1c5a1c 50%, #33423a);
    text-align: center;
}
.passband span {
    display: inline-block;
    width: 10px;
    margin-top: 4px;
    background-color: #16401a;
    color: #fff;
}
.levels {
    position: absolute;
    left: 2px;
    top: 4px;
    color: #bbb;
    font-size: 5px;
}
.station {
    position: absolute;
    left: 57%;
    top: 17px;
    color: #b8c030;
    white-space: nowrap;
}
.meter {
    position: absolute;
    left: 31px;
    top: 3px;
    width: 144px;
    height: 57px;
}
.meter-text {
    font-size: 22px;
    font-style: italic;
    fill: #4a4020;
}
.meter-read {
    font-size: 21px;
    font-weight: bold;
    text-anchor: middle;
    fill: #222;
}
.scale {
    display: flex;
    height: 16px;
    padding-top: 4px;
    overflow: hidden;
    color: #ddd;
    background: #000 linear-gradient(#333, #777) no-repeat 0 0 / 100% 3px;
    border-bottom: 2px solid #e8e8f4;
}
.scale span {
    flex: 0 0 16%;
    margin-right: -1px;
    text-align: center;
}
.scale span:first-child {
    margin-left: -13px;
}
.waterfall {
    flex: 1;
    min-height: 0;
    position: relative;
    background-color: #00007a;
}
.waterfall canvas {
    position: absolute;
    width: 100%;
    height: 100%;
}
.clock {
    position: absolute;
    left: 6px;
    bottom: 6px;
    width: 118px;
    height: 41px;
    padding-top: 1px;
    text-align: center;
    color: #fff;
    background-color: #060c2e;
}
.clock small {
    display: block;
    font-size: 5px;
    line-height: 8px;
}
.clock time {
    font: 24px/24px "DejaVu Sans Mono", monospace;
}
.clock time span {
    font-size: 14px;
}

/* Weather fax window */
.fax {
    display: flex;
    flex-direction: column;
    min-width: 0;
    background-color: #f0f0ee;
}
.fax-title {
    display: flex;
    align-items: center;
    height: 20px;
    padding: 1px 1px 0 5px;
    gap: 2px;
    background-color: #fff;
}
.fax-title > svg {
    width: 10px;
    height: 10px;
}
.fax-menu {
    display: flex;
    gap: 6px;
    height: 12px;
    padding: 1px 3px 0;
    background-color: #fff;
}
.fax-body {
    padding: 14px 12px 8px 14px;
}
.row {
    display: grid;
    align-items: center;
    gap: 8px;
    height: 14px;
}
.fax-body button, .fax-body select {
    height: 14px;
    background-color: #e2e2e0;
    border: 1px solid #d2d2d0;
    border-radius: 0;
    min-width: 0;
}
.fax-body select {
    appearance: none;
    padding: 0 1px;
    background-image: url("data:image/svg+xml,%3Csvg xmlns='http://www.w3.org/2000/svg' viewBox='0 0 6 4'%3E%3Cpath d='M1 0l2 3 2-3' fill='none' stroke='%23555' stroke-width='.8'/%3E%3C/svg%3E");
    background-repeat: no-repeat;
    background-position: right 2px center;
    background-size: 6px 4px;
}
.fax-body .focused {
    border-color: #2b7cc4;
}
.row-input {
    grid-template-columns: 60px 166px 41px 47px 40px 60px 44px 44px 38px;
    gap: 2px;
}
.row-input span {
    padding-left: 4px;
}
.row-input label[for="gain"] {
    padding-left: 10px;
}
.level {
    height: 14px;
    border: 1px solid #dcdcda;
    background: #e6e6e4 linear-gradient(#12cc2c, #12cc2c) no-repeat 0 0 / 11px 100%;
}
#gain {
    width: 52px;
    height: 14px;
    background: linear-gradient(#ddd, #ddd) no-repeat center / 100% 1px;
}
#gain::-webkit-slider-thumb {
    appearance: none;
    width: 8px;
    height: 13px;
    background-color: #1070c4;
    clip-path: polygon(0 0, 100% 0, 100% 75%, 50% 100%, 0 75%);
}
.tune {
    display: flex;
    gap: 12px;
    padding-top: 9px;
}
.mini {
    width: 164px;
    flex: none;
}
.mini-head {
    display: flex;
    justify-content: space-between;
    padding: 0 3px 10px 0;
}
.mini canvas {
    width: 100%;
    height: 59px;
}
.tune-rows {
    flex: 1;
    display: flex;
    flex-direction: column;
    gap: 8px;
}
.row-step {
    grid-template-columns: 35px 33px 32px 33px 65px 34px 33px 33px 20px;
}
.row-step output {
    text-align: center;
}
.row-flags {
    grid-template-columns: 44px 53px 36px 62px 45px 33px 53px;
}
.row-flags label, .row-freq label {
    gap: 2px;
}
.row-freq {
    grid-template-columns: 159px 49px 54px 17px 37px;
}
#khz {
    width: 100%;
    height: 15px;
    border: 1px solid #bbb;
    background-color: #fff;
}
.row-zoom {
    grid-template-columns: 66px 53px 54px 53px 57px 53px 71px;
    padding-left: 102px;
    margin-top: 8px;
}
.fax-view {
    flex: 1;
    min-height: 0;
    display: grid;
    grid-template: 1fr 12px / 494px 1fr;
    padding: 0 1px 0 14px;
}
.paper {
    background-color: #fff;
    overflow: hidden;
}
.map {
    display: block;
    width: 494px;
    height: 331px;
}
.gray {
    fill: url(#haze);
}
.light {
    fill: #e0e0df;
}
.dark {
    fill: url(#dots);
    stroke: #222;
    stroke-width: 3px;
}
.coast, .grid {
    fill: none;
    stroke: #333;
    stroke-width: 3px;
}
.grid {
    stroke: #666;
    stroke-width: 2px;
}
.map-title {
    font: 8px "Liberation Mono", monospace;
    fill: #777;
}
.map-text {
    font: bold 7px "Liberation Mono", monospace;
    fill: #222;
}
.map-depth {
    font: bold 7px "Liberation Mono", monospace;
    fill: #333;
}
.map-depth rect {
    fill: #e0e0df;
}
.vscroll {
    display: flex;
    flex-direction: column;
    align-items: center;
    width: 12px;
    justify-self: end;
    background-color: #f3f3f1;
}
.vscroll i {
    width: 12px;
    height: 12px;
    background-color: #cdcdcd;
}
.vscroll b:last-child {
    margin-top: auto;
}
.hscroll {
    grid-column: 1 / 3;
    display: flex;
    align-items: center;
    gap: 3px;
    padding: 0 14px 0 4px;
    background-color: #f3f3f1;
}
.hscroll i {
    width: 28px;
    height: 9px;
    background-color: #cdcdcd;
}
.hscroll b:last-child {
    margin-left: auto;
}

/* Band scale */
.band {
    display: flex;
    height: 19px;
    border-top: 1px solid #446;
    background-color: #ececea;
}
.band button {
    width: 18px;
}
.band svg {
    width: 14px;
    height: 14px;
}
.band .zoom {
    width: 22px;
}
.band .next {
    width: 15px;
}
.band-scale {
    flex: 1;
    min-width: 0;
    position: relative;
    display: flex;
    overflow: hidden;
    background: #080808;
    color: #aaa;
    font-size: 8px;
    line-height: 22px;
}
.band-scale::after {
    content: "";
    position: absolute;
    inset: 0 0 auto;
    height: 3px;
    background-image: repeating-linear-gradient(90deg, #888 0 1px, transparent 1px 8px);
}
.band-scale span {
    flex: 0 0 calc(100% * 7 / 80);
    position: relative;
    text-align: center;
}
.band-scale span:first-of-type {
    margin-left: -29px;
}
.band-view {
    position: absolute;
    left: 25%;
    right: 26%;
    top: 0;
    bottom: 0;
    border: solid #999;
    border-width: 0 1px;
    background: linear-gradient(#cdcb20, #cdcb20) no-repeat 50% 0 / 2px 100%, linear-gradient(#444, #383838 50%, #6d6d18);
}

/* Colour legend */
.legend {
    width: 27px;
    position: relative;
    background-color: #000;
    border-left: 1px solid #ddd;
    color: #888;
    font-size: 5px;
}
.legend::after {
    content: "";
    position: absolute;
    inset: 0 2px 0 auto;
    width: 1px;
    background-color: #999;
}
.legend button {
    display: block;
    width: 26px;
    height: 18px;
    font-size: 7px;
    color: #bbb;
    background-color: #262626;
}
.ramp {
    position: absolute;
    left: 1px;
    right: 3px;
    top: 167px;
    height: 247px;
    border: solid #bbb;
    border-width: 1px 0;
    background-image: linear-gradient(#e8108c, #f01040 12%, #f01a00 22%, #f09000 32%, #f0f000 42%, #50f000 52%, #00f0a0 61%, #00f0f0 71%, #0070f0 80%, #0000f0 87%, #000050 97%, #000);
}
.legend ol {
    position: relative;
    display: grid;
    grid-auto-rows: 36px 37px 37px;
    align-items: center;
    margin-top: 19px;
    padding: 0 5px 0 3px;
}
.legend li {
    text-align: center;
}
.legend .chip {
    border-radius: 2px;
    background-color: rgba(0, 0, 0, .35);
}
.pointer {
    position: absolute;
    left: 655px;
    top: 398px;
    width: 36px;
    height: 36px;
}

/* Status bar */
footer {
    display: flex;
    align-items: center;
    gap: 3px;
    height: 16px;
    padding: 0 4px 0 2px;
    border-bottom: 1px solid #aaa;
    background-color: #f1f1ee;
    white-space: nowrap;
}
footer svg {
    width: 10px;
    height: 10px;
}
footer .disk {
    width: 6px;
}
footer .grow {
    flex: 1;
    color: #777;
}
footer .time {
    padding-right: 5px;
}
footer meter {
    width: 20px;
    height: 7px;
    margin-right: 6px;
}
meter::-webkit-meter-bar {
    height: 7px;
    border: none;
    border-radius: 0;
    background: #e6e6e4;
}
meter::-webkit-meter-optimum-value {
    background: #22b53a;
}
```

FILE: script.js
```js
// Small seeded generator so every paint gives the same noise
let seed = 7;
function rand() {
    seed = (seed * 16807) % 2147483647;
    return seed / 2147483647;
}

function setup(id) {
    const canvas = document.getElementById(id);
    canvas.width = canvas.clientWidth;
    canvas.height = canvas.clientHeight;
    return [canvas.getContext('2d'), canvas.width, canvas.height];
}

// Linear interpolation over a list of [x, y] points
function curve(points, x) {
    for (let i = 1; i < points.length; i++) {
        if (x <= points[i][0]) {
            const [x0, y0] = points[i - 1];
            const [x1, y1] = points[i];
            return y0 + (y1 - y0) * (x - x0) / (x1 - x0);
        }
    }
    return points[points.length - 1][1];
}

function drawAudio() {
    const [ctx, w, h] = setup('audio-wave');
    ctx.strokeStyle = '#333';
    for (let x = 16.5; x < w; x += 33.4) {
        ctx.strokeRect(x, 0, 0, h);
    }
    const top = [[0, 26], [20, 25], [60, 22], [75, 16], [w, 16]];
    const bottom = [[0, 60], [25, 61], [45, 66], [80, 69], [w, 69]];
    const fill = ctx.createLinearGradient(0, 14, 0, 70);
    fill.addColorStop(0, '#159a15');
    fill.addColorStop(0.5, '#b4ff72');
    fill.addColorStop(1, '#159a15');
    ctx.beginPath();
    for (let x = 0; x <= w; x++) {
        const spike = x < 70 && rand() > 0.9 ? 4 : 0;
        ctx.lineTo(x, curve(top, x) + rand() * 2 - spike);
    }
    for (let x = w; x >= 0; x--) {
        const spike = x < 70 && rand() > 0.9 ? 4 : 0;
        ctx.lineTo(x, curve(bottom, x) - rand() * 2 - spike);
    }
    ctx.closePath();
    ctx.fillStyle = fill;
    ctx.fill();
    ctx.strokeStyle = '#8fd58f';
    ctx.lineWidth = 0.6;
    ctx.stroke();
    ctx.strokeStyle = '#999';
    ctx.lineWidth = 1;
    ctx.strokeRect(0.5, 0.5, w - 1, h - 1);
}

function drawSpectrum() {
    const [ctx, w, h] = setup('spectrum');
    const k = w / 472;
    const peaks = [
        [0, 97], [185, 97], [192, 82], [198, 90], [208, 93], [225, 87], [235, 89], [240, 73],
        [245, 95], [251, 92], [256, 62], [260, 71], [263, 50], [267, 78], [271, 70], [275, 86],
        [283, 95], [292, 94], [299, 88], [304, 84], [306, 97], [472, 97]
    ];
    const fill = ctx.createLinearGradient(0, 50, 0, h);
    fill.addColorStop(0, '#9fe89f');
    fill.addColorStop(0.35, '#20b060');
    fill.addColorStop(0.6, '#1060a0');
    fill.addColorStop(0.8, '#101070');
    fill.addColorStop(1, '#080850');
    const line = [];
    for (let x = 0; x <= 472; x += 1.5) {
        line.push([x * k, curve(peaks, x) + (rand() - 0.5) * 8]);
    }
    ctx.beginPath();
    ctx.moveTo(0, h - 2);
    line.forEach(p => ctx.lineTo(p[0], p[1]));
    ctx.lineTo(w, h - 2);
    ctx.fillStyle = fill;
    ctx.fill();
    ctx.beginPath();
    line.forEach(p => ctx.lineTo(p[0], p[1]));
    ctx.strokeStyle = '#b4b4d8';
    ctx.lineWidth = 0.8;
    ctx.stroke();
    ctx.fillStyle = '#5fc84a';
    ctx.fillRect(185 * k, 24, 120 * k, 1);
    ctx.fillStyle = '#9ac83a';
    ctx.fillRect(266 * k, 22, 1, 78);
}

function drawMini() {
    const [ctx, w, h] = setup('mini-spectrum');
    const base = h - 6;
    const shape = [
        [0, 0], [24, 1], [27, 14], [38, 15], [39, 2], [45, 8], [60, 7], [70, 8], [76, 6], [98, 1],
        [103, 18], [110, 28], [120, 26], [124, 38], [127, 52], [130, 40], [135, 22], [142, 12], [155, 6], [164, 2]
    ];
    ctx.fillStyle = '#929292';
    ctx.fillRect(0, 0, w, h);
    ctx.fillStyle = '#ee1111';
    for (let x = 0; x < w; x++) {
        const v = curve(shape, x) * (0.65 + rand() * 0.6);
        ctx.fillRect(x, base - v, 1, v);
    }
    ctx.fillStyle = '#6ccfcf';
    for (let x = 0; x < w; x++) {
        if (rand() > 0.7) continue;
        const lift = x > 100 ? curve(shape, x) * 0.45 : 2;
        ctx.fillRect(x, base - lift - rand() * 6, 1, 2);
    }
    ctx.fillStyle = '#111';
    for (let x = 9; x < w; x += 9) {
        ctx.fillRect(x, h - 5, 1, 5);
    }
    ctx.fillStyle = '#1414d8';
    ctx.fillRect(64, 0, 2, h);
    ctx.fillRect(137, 0, 2, h);
}

const ramp = [
    [0, [0, 0, 60]], [0.15, [0, 0, 150]], [0.3, [10, 50, 225]], [0.48, [40, 180, 235]],
    [0.62, [60, 225, 150]], [0.78, [190, 235, 50]], [0.9, [240, 190, 20]], [1, [240, 90, 10]]
];
function colour(v) {
    v = Math.max(0, Math.min(1, v));
    return [0, 1, 2].map(i => curve(ramp.map(r => [r[0], r[1][i]]), v));
}
const palette = [];
for (let i = 0; i < 256; i++) {
    palette.push(colour(i / 255));
}

function drawWaterfall() {
    const [ctx, w, h] = setup('waterfall');
    const k = w / 472;
    const image = ctx.createImageData(w, h);
    // strength of each column inside the passband
    const band = [
        [185, 0.36], [192, 0.42], [198, 0.34], [205, 0.26], [215, 0.32], [225, 0.42], [236, 0.42],
        [244, 0.36], [252, 0.44], [258, 0.54], [268, 0.56], [275, 0.44], [284, 0.3], [292, 0.34], [305, 0.4]
    ];
    for (let y = 0; y < h; y++) {
        const stripe = rand() > 0.8 ? -0.2 : (rand() - 0.5) * 0.08;
        let grain = 0;
        let row = 0;
        if (y === 173) row = 0.18;
        if (y === 164 || y === 184) row = 0.05;
        if (y > 308 && y < 336) row = 0.07;
        if (y === 334 || y === 318) row = 0.14;
        if (y > 422 && y < 446) row = 0.12;
        if (y === 428 || y === 442) row = 0.2;
        for (let x = 0; x < w; x++) {
            const u = x / k;
            // neighbouring cells share most of their noise
            grain = grain * 0.5 + (rand() - 0.5) * 0.5;
            let v = 0.11 + grain * 0.17 + row * rand() * 1.6;
            if (Math.abs(u - 360) < 1) v += y > 173 && y < 298 ? 0.16 : 0.03;
            if (Math.abs(u - 155) < 1) v += 0.05;
            if (u > 185 && u < 306) {
                const drift = Math.sin(y / 38) * 5 + Math.sin(y / 17) * 2;
                let shape = curve(band, Math.max(185, Math.min(305, u + drift)));
                shape += 0.09 * Math.sin(u / 9 + y / 50) * Math.sin(y / 45 + u / 30);
                if (y > 115) shape += 0.04;
                // dark fade wandering through the middle of the band
                const fade = y < 80 ? 207 : 222 + (y - 115) / 8;
                if ((y < 80 || y > 125) && y < 245 && Math.abs(u - fade) < 4) shape -= 0.15;
                if (y < 130 && Math.abs(u - 284) < 6) shape -= 0.08;
                v = shape + stripe + grain * 0.4;
                if (Math.abs(u - 263) < 2.2) v = 0.76 + grain * 0.2 + Math.sin(y / 40) * 0.08 + stripe * 0.5;
            }
            const c = palette[Math.max(0, Math.min(255, Math.round(v * 255)))];
            const i = (y * w + x) * 4;
            image.data[i] = c[0];
            image.data[i + 1] = c[1];
            image.data[i + 2] = c[2];
            image.data[i + 3] = 255;
        }
    }
    ctx.putImageData(image, 0, 0);
}

function drawAll() {
    seed = 7;
    drawAudio();
    drawSpectrum();
    drawMini();
    drawWaterfall();
}

drawAll();
window.addEventListener('resize', drawAll);
```
